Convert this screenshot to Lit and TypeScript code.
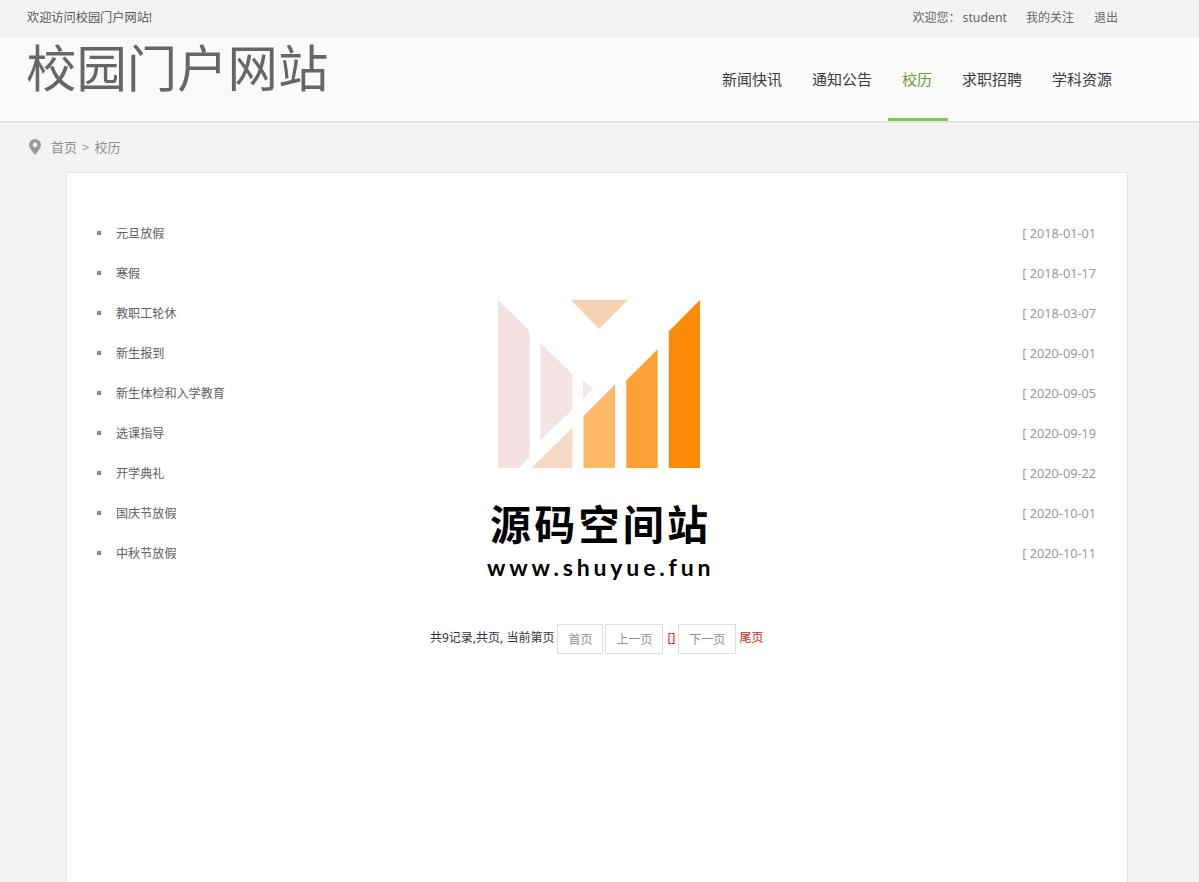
import { LitElement, html, css } from "lit";
import { customElement } from "lit/decorators.js";
import { classMap } from "lit/directives/class-map.js";

const NAV = ["新闻快讯", "通知公告", "校历", "求职招聘", "学科资源"];
const EVENTS: [string, string][] = [
  ["元旦放假", "2018-01-01"],
  ["寒假", "2018-01-17"],
  ["教职工轮休", "2018-03-07"],
  ["新生报到", "2020-09-01"],
  ["新生体检和入学教育", "2020-09-05"],
  ["选课指导", "2020-09-19"],
  ["开学典礼", "2020-09-22"],
  ["国庆节放假", "2020-10-01"],
  ["中秋节放假", "2020-10-11"],
];

@customElement("site-header")
class SiteHeader extends LitElement {
  static styles = css`
    :host { display: block; }
    .top {
      height: 36px; padding: 0 81px 0 27px; display: flex; justify-content: space-between;
      background: #f3f3f3; border-bottom: 1px solid #f0f0f0; font-size: 12px; line-height: 35px; color: #666;
    }
    .welcome { color: #555; font-size: 12.2px; }
    .user { display: flex; }
    .name { font-size: 12.3px; margin: 0 19px 0 2px; }
    .follow { margin-right: 20px; }
    .bar {
      height: 84px; padding: 0 71px 0 26px; display: flex; justify-content: space-between;
      background: #fafafa; border-bottom: 2px solid #e6e6e6;
    }
    .brand { font-size: 50.4px; line-height: 61px; color: #666; }
    .nav { display: flex; }
    .item { box-sizing: border-box; height: 84px; padding: 0 16px 0 14px; font-size: 15px; line-height: 85px; color: #3a3a3a; }
    .active { color: #5ea32c; border-bottom: 3px solid #85c44d; }
  `;
  render() {
    return html`
      <div class="top">
        <span class="welcome">欢迎访问校园门户网站!</span>
        <div class="user">
          <span>欢迎您：</span><span class="name">student</span>
          <span class="follow">我的关注</span><span>退出</span>
        </div>
      </div>
      <div class="bar">
        <div class="brand">校园门户网站</div>
        <nav class="nav">
          ${NAV.map((n) => html`<a class=${classMap({ item: true, active: n === "校历" })}>${n}</a>`)}
        </nav>
      </div>`;
  }
}

@customElement("site-watermark")
class SiteWatermark extends LitElement {
  static styles = css`
    :host { display: block; }
    .mark { display: block; }
    .cn { font: 700 41px "Noto Sans CJK SC", sans-serif; }
    .url { font: 700 23px Lato, sans-serif; }
  `;
  render() {
    return html`
      <svg class="mark" width="240" height="300" viewBox="480 290 240 300">
        <path fill="#f3e1e2" d="M498 300L529.5 331V457L519 468H498Z" />
        <path fill="#f5e4e4" d="M540.5 343.5L572.5 374V409.5L540.5 440Z" />
        <path fill="#f7e5e2" d="M583 380L592.7 388.8L583 399Z" />
        <path fill="#f7d2b0" d="M570.5 299.7H628L599 329Z" />
        <path fill="#f7dac5" d="M531.5 468L572.5 427.5V468Z" />
        <path fill="#fdb868" d="M583.5 416L615 384.5V468H583.5Z" />
        <path fill="#fba136" d="M626.3 380.5L657.7 349.3V468H626.3Z" />
        <path fill="#fb8a04" d="M668.8 331.3L700 300V468H668.8Z" />
        <text class="cn" x="490" y="539.5" textLength="218">源码空间站</text>
        <text class="url" x="487" y="576" textLength="223.500">www.shuyue.fun</text>
      </svg>`;
  }
}

@customElement("app-root")
class AppRoot extends LitElement {
  static styles = css`
    :host {
      display: block; position: relative; height: 882px; overflow: hidden; background: #f3f3f3;
      font-family: "Noto Sans", "Noto Sans CJK SC", sans-serif; white-space: nowrap;
    }
    .crumb {
      box-sizing: border-box; display: flex; align-items: center; height: 49px; padding: 0 0 2px 29px;
      font-size: 13px; color: #909090;
    }
    .pin { margin-right: 10px; }
    .sep { margin: 0 5px; font-size: 13px; }
    .panel {
      box-sizing: border-box; width: 1062px; height: 720px; margin-left: 66px; padding: 40px 31px 0 30px;
      background: #fff; border: 1px solid #e6e6e6;
    }
    .row { display: flex; align-items: center; height: 40px; font-size: 12.1px; color: #606060; }
    .dot { width: 4px; height: 4px; background: #888; margin-right: 15px; }
    .date { margin-left: auto; font-size: 12.7px; color: #999; }
    .pager { display: flex; margin: 51px 0 0 333px; height: 30px; font-size: 12px; line-height: 27px; color: #333; }
    .btn {
      box-sizing: border-box; height: 30px; padding: 0 10px; margin-left: 2px; line-height: 29px;
      border: 1px solid #ddd; color: #909090;
    }
    .first { margin-left: 3px; }
    .red { color: #e0140a; }
    .current { margin: 0 1px 0 4px; }
    .last { margin-left: 3px; }
    .overlay { position: absolute; left: 480px; top: 290px; }
  `;
  render() {
    return html`
      <site-header></site-header>
      <div class="crumb">
        <svg class="pin" width="12" height="16" viewBox="0 0 12 16">
          <path fill="#999" fill-rule="evenodd" d="M6 0A6 6 0 0 0 0 6C0 9.500 4 13 6 16C8 13 12 9.500 12 6A6 6 0 0 0 6 0ZM6 3.600A2.300 2.300 0 1 1 6 8.200A2.300 2.300 0 1 1 6 3.600Z" />
        </svg>
        <span>首页</span><span class="sep">&gt;</span><span>校历</span>
      </div>
      <main class="panel">
        ${EVENTS.map(([t, d]) => html`<div class="row"><i class="dot"></i><span>${t}</span><span class="date">[ ${d}</span></div>`)}
        <div class="pager">
          <span>共9记录,共页, 当前第页</span>
          <a class="btn first">首页</a><a class="btn">上一页</a>
          <span class="red current">[]</span>
          <a class="btn">下一页</a><a class="red last">尾页</a>
        </div>
      </main>
      <site-watermark class="overlay"></site-watermark>`;
  }
}
